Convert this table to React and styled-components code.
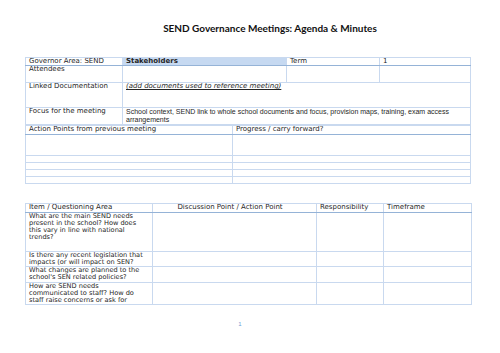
import styled, { createGlobalStyle } from "styled-components";

const GlobalStyle = createGlobalStyle`
   html, body {
      margin: 0;
      padding: 0;
      background: #ffffff;
   }
`;

const Page = styled.div`
   width: 500px;
   height: 353px;
   box-sizing: border-box;
   padding: 22px 30px 0 25px;
   font-family: "DejaVu Sans", Verdana, sans-serif;
   color: #262626;
   display: flex;
   flex-direction: column;
`;

const Title = styled.h1`
   margin: 0 0 23px 0;
   height: 12px;
   font-family: Lato, "Open Sans", sans-serif;
   font-weight: 700;
   font-size: 10px;
   line-height: 12px;
   text-align: center;
   padding-left: 45px;
   color: #111;
`;

const Table = styled.table`
   width: ${(p) => p.$width}px;
   border-collapse: collapse;
   table-layout: fixed;
   margin-bottom: ${(p) => p.$gap || 0}px;
`;

const Row = styled.tr`
   height: ${(p) => p.$h}px;
`;

const Cell = styled.td`
   border: 1px solid #c9d9ef;
   border-bottom: ${(p) => (p.$head ? "1px solid #95b3d7" : "1px solid #c9d9ef")};
   padding: 0 3px;
   vertical-align: top;
   font-size: 7px;
   line-height: 7.4px;
   background: ${(p) => (p.$fill ? "#c6d9f1" : "transparent")};
   font-weight: ${(p) => (p.$bold ? 700 : 400)};
   text-align: ${(p) => (p.$center ? "center" : "left")};
   padding-right: ${(p) => (p.$center ? "12px" : "3px")};
   overflow: hidden;
   white-space: nowrap;
`;

const Note = styled.span`
   font-style: italic;
   text-decoration: underline;
`;

const FocusLine = styled.div`
   font-family: "Liberation Sans", Arial, sans-serif;
   font-size: 7px;
   line-height: 7.4px;
`;

const QuestionLine = styled.div`
   font-size: 6.6px;
   line-height: 7.2px;
`;

const PageNum = styled.div`
   margin-top: 16px;
   text-align: center;
   font-family: "Liberation Sans", Arial, sans-serif;
   font-size: 6px;
   color: #6f9bd6;
   padding-right: 15px;
`;

const questions = [
   { h: 39, lines: ["What are the main SEND needs", "present in the school? How does", "this vary in line with national", "trends?"] },
   { h: 15, lines: ["Is there any recent legislation that", "impacts (or will impact on SEN?"] },
   { h: 15, lines: ["What changes are planned to the", "school's SEN related policies?"] },
   { h: 22, lines: ["How are SEND needs", "communicated to staff? How do", "staff raise concerns or ask for"] },
];

export default function App() {
   return (
      <>
         <GlobalStyle />
         <Page>
            <Title>SEND Governance Meetings: Agenda &amp; Minutes</Title>

            <Table $width={445}>
               <colgroup>
                  <col style={{ width: 97 }} />
                  <col style={{ width: 164 }} />
                  <col style={{ width: 93 }} />
                  <col style={{ width: 91 }} />
               </colgroup>
               <tbody>
                  <Row $h={8}>
                     <Cell $head>Governor Area: SEND</Cell>
                     <Cell $head $fill $bold>Stakeholders</Cell>
                     <Cell $head>Term</Cell>
                     <Cell $head>1</Cell>
                  </Row>
                  <Row $h={17}>
                     <Cell>Attendees</Cell>
                     <Cell />
                     <Cell />
                     <Cell />
                  </Row>
                  <Row $h={25}>
                     <Cell>Linked Documentation</Cell>
                     <Cell colSpan={3}>
                        <Note>(add documents used to reference meeting)</Note>
                     </Cell>
                  </Row>
                  <Row $h={17}>
                     <Cell>Focus for the meeting</Cell>
                     <Cell colSpan={3}>
                        <FocusLine>School context, SEND link to whole school documents and focus, provision maps, training, exam access</FocusLine>
                        <FocusLine>arrangements</FocusLine>
                     </Cell>
                  </Row>
               </tbody>
            </Table>

            <Table $width={445} $gap={19}>
               <colgroup>
                  <col style={{ width: 207 }} />
                  <col style={{ width: 238 }} />
               </colgroup>
               <tbody>
                  <Row $h={9}>
                     <Cell $head>Action Points from previous meeting</Cell>
                     <Cell $head>Progress / carry forward?</Cell>
                  </Row>
                  <Row $h={21}>
                     <Cell />
                     <Cell />
                  </Row>
                  {[0, 1, 2, 3].map((i) => (
                     <Row key={i} $h={7}>
                        <Cell />
                        <Cell />
                     </Row>
                  ))}
               </tbody>
            </Table>

            <Table $width={446}>
               <colgroup>
                  <col style={{ width: 127 }} />
                  <col style={{ width: 164 }} />
                  <col style={{ width: 67 }} />
                  <col style={{ width: 88 }} />
               </colgroup>
               <tbody>
                  <Row $h={8}>
                     <Cell $head>Item / Questioning Area</Cell>
                     <Cell $head $center>Discussion Point / Action Point</Cell>
                     <Cell $head>Responsibility</Cell>
                     <Cell $head>Timeframe</Cell>
                  </Row>
                  {questions.map((q, i) => (
                     <Row key={i} $h={q.h}>
                        <Cell>
                           {q.lines.map((l, j) => (
                              <QuestionLine key={j}>{l}</QuestionLine>
                           ))}
                        </Cell>
                        <Cell />
                        <Cell />
                        <Cell />
                     </Row>
                  ))}
               </tbody>
            </Table>

            <PageNum>1</PageNum>
         </Page>
      </>
   );
}
